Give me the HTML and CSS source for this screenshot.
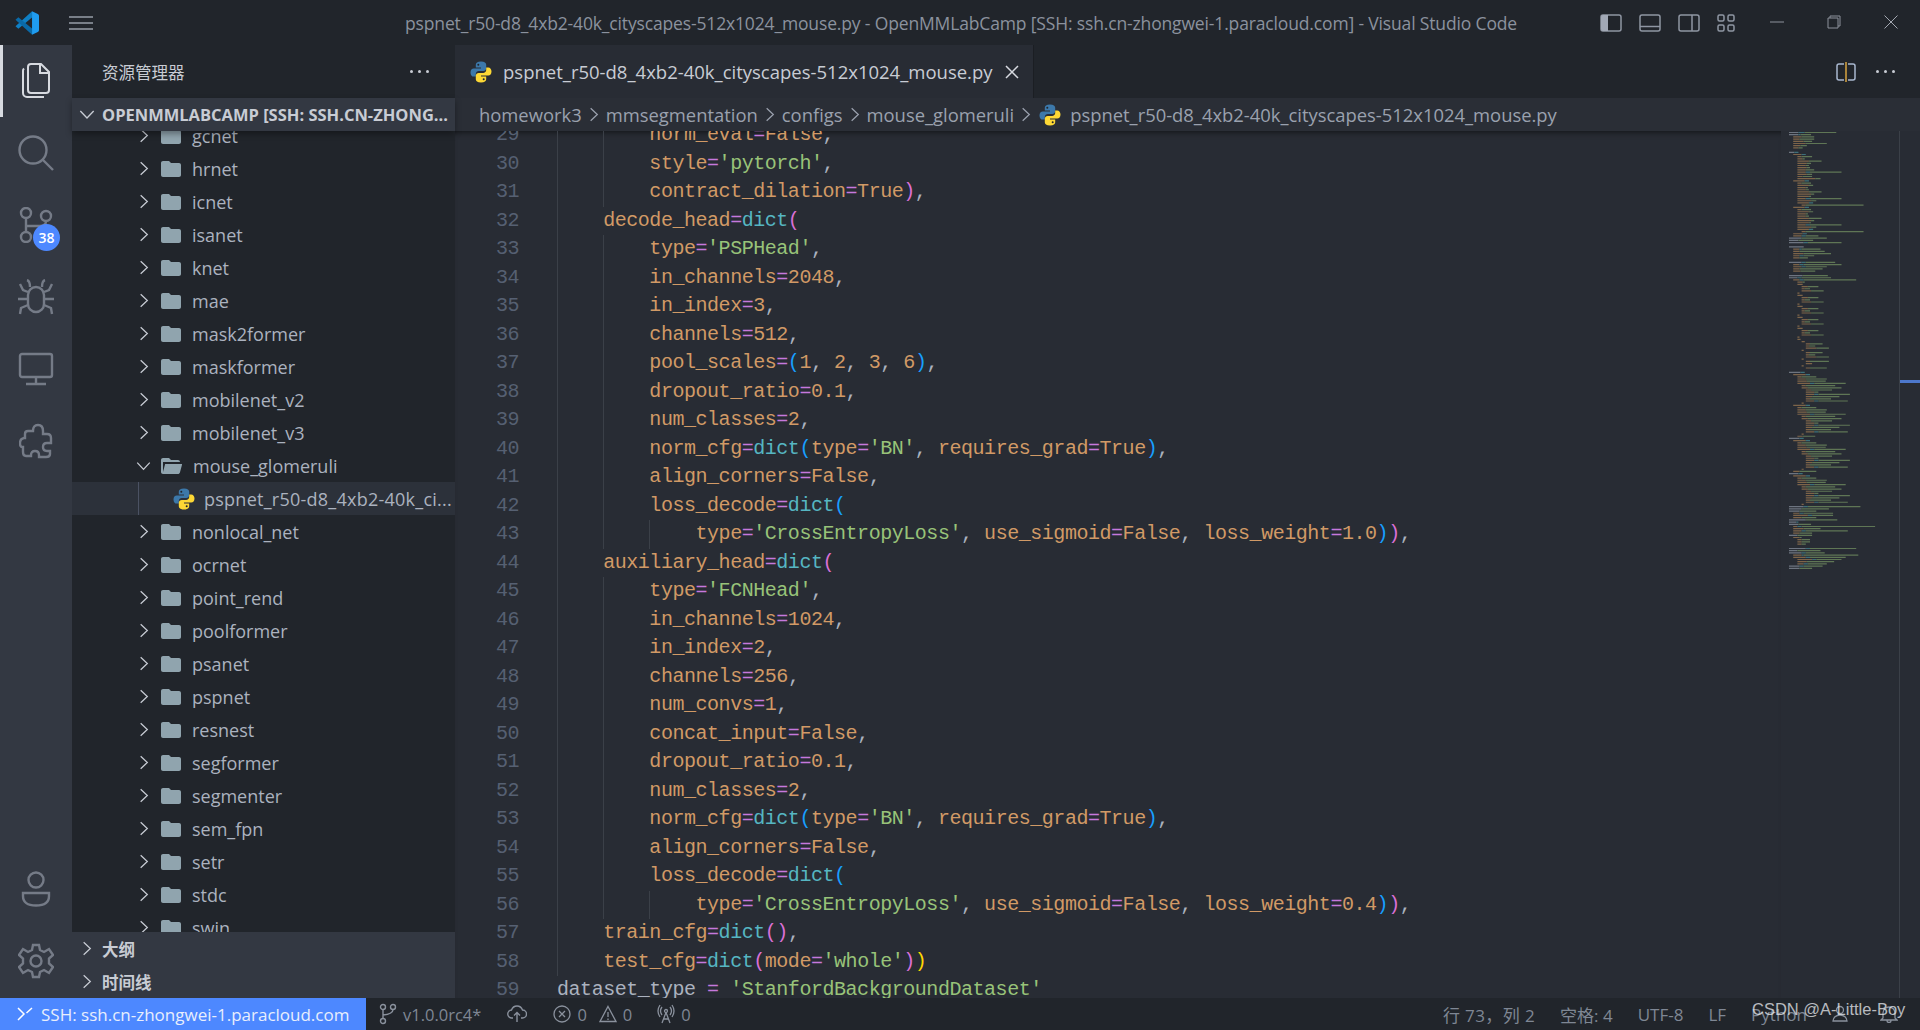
FILE: index.html
```html
<!DOCTYPE html>
<html lang="zh-CN">
<head>
    <meta charset="UTF-8">
    <title>pspnet_r50-d8_4xb2-40k_cityscapes-512x1024_mouse.py - OpenMMLabCamp</title>
    <link rel="stylesheet" href="styles.css">
</head>
<body>
    <!-- shared icons -->
    <svg class="defs" width="0" height="0">
        <symbol id="chev-r" viewBox="0 0 12 18"><path d="M2 1.5 10 9 2 16.5" fill="none" stroke="currentColor" stroke-width="1.5"/></symbol>
        <symbol id="chev-d" viewBox="0 0 18 12"><path d="M1.5 2 9 10 16.5 2" fill="none" stroke="currentColor" stroke-width="1.5"/></symbol>
        <symbol id="folder" viewBox="2 4 20 16"><path d="M10 4H4c-1.1 0-2 .9-2 2v12c0 1.1.9 2 2 2h16c1.1 0 2-.9 2-2V8c0-1.1-.9-2-2-2h-8l-2-2z" fill="#90a4ae"/></symbol>
        <symbol id="folder-open" viewBox="2 4 21 16"><path d="M19 20H4c-1.1 0-2-.9-2-2V6c0-1.1.9-2 2-2h6l2 2h7c1.1 0 2 .9 2 2H4v10l2.14-8h17.07l-2.28 8.5c-.23.87-1.01 1.5-1.93 1.5z" fill="#90a4ae"/></symbol>
        <symbol id="python" viewBox="0 0 24 24">
            <path d="M12 1.5C8.3 1.5 6.8 2.9 6.8 4.8v2.6H12v1H4.8C2.8 8.4 1.5 10 1.5 12.4s1.3 4.2 3.3 4.2h2v-2.7c0-1.7 1.4-2.9 3.1-2.9h4.4c1.6 0 2.9-1.2 2.9-2.8V4.8c0-1.9-1.5-3.3-5.2-3.3z" fill="#3c78aa"/>
            <path d="M12 22.500c3.700 0 5.200-1.400 5.200-3.300v-2.600H12v-1h7.200c2 0 3.300-1.600 3.300-4s-1.300-4.200-3.300-4.200h-2v2.700c0 1.700-1.400 2.900-3.100 2.900H9.700c-1.600 0-2.900 1.200-2.900 2.800v3.400c0 1.900 1.500 3.300 5.200 3.300z" fill="#fdd835"/>
            <circle cx="9.300" cy="4.700" r="1" fill="#21252b"/>
            <circle cx="14.700" cy="19.300" r="1" fill="#21252b"/>
        </symbol>
    </svg>

    <header class="titlebar">
        <svg class="logo" viewBox="0 0 100 100" width="24" height="24">
            <path d="M71 1 2 64 14 74 71 27z" fill="#0f7fc4"/>
            <path d="M71 99 2 36 14 26 71 73z" fill="#0a6aa8"/>
            <path d="M71 1 95 13Q100 15 100 20V80Q100 85 95 87L71 99z" fill="#1f9cf0"/>
        </svg>
        <svg class="menu" viewBox="0 0 26 16" width="26" height="16"><path d="M1 2H25M1 8H25M1 14H25" stroke="#979da8" stroke-width="1.500"/></svg>
        <div class="window-title">pspnet_r50-d8_4xb2-40k_cityscapes-512x1024_mouse.py - OpenMMLabCamp [SSH: ssh.cn-zhongwei-1.paracloud.com] - Visual Studio Code</div>
        <div class="layout-btns">
            <svg viewBox="0 0 22 18" width="22" height="18"><rect x="1" y="1" width="20" height="16" rx="2" fill="none" stroke="#8f96a3" stroke-width="1.500"/><path d="M1 3a2 2 0 0 1 2-2H8V17H3a2 2 0 0 1-2-2z" fill="#a2a9b6"/></svg>
            <svg viewBox="0 0 22 18" width="22" height="18"><rect x="1" y="1" width="20" height="16" rx="2" fill="none" stroke="#8f96a3" stroke-width="1.500"/><path d="M1 12.500H21" stroke="#8f96a3" stroke-width="1.500"/></svg>
            <svg viewBox="0 0 22 18" width="22" height="18"><rect x="1" y="1" width="20" height="16" rx="2" fill="none" stroke="#8f96a3" stroke-width="1.500"/><path d="M14 1V17" stroke="#8f96a3" stroke-width="1.500"/></svg>
            <svg viewBox="0 0 18 18" width="18" height="18"><g fill="none" stroke="#8f96a3" stroke-width="1.500"><rect x="1" y="1" width="6" height="6" rx="1.500"/><rect x="11" y="1" width="6" height="6" rx="1.500"/><rect x="1" y="11" width="6" height="6" rx="1.500"/><rect x="11" y="11" width="6" height="6" rx="1.500"/></g></svg>
        </div>
        <div class="window-btns">
            <svg viewBox="0 0 14 14" width="14" height="14"><path d="M0 7H14" stroke="#8d929c"/></svg>
            <svg viewBox="0 0 14 14" width="14" height="14"><path d="M3 3V1H13V11H11M1 3H11V13H1z" fill="none" stroke="#8d929c"/></svg>
            <svg viewBox="0 0 14 14" width="14" height="14"><path d="M.5.5 13.500 13.500M13.500.5.5 13.500" stroke="#a3a8b1"/></svg>
        </div>
    </header>

    <div class="workbench">
        <nav class="activitybar">
            <div class="activity-item active">
                <svg viewBox="0 0 32 38" width="32" height="38" fill="none" stroke="#d7dae0" stroke-width="2"><path d="M11 2H21L29 10V28a3 3 0 0 1-3 3H11a3 3 0 0 1-3-3V5a3 3 0 0 1 3-3zM20 2V11H29"/><path d="M4 6.500A3 3 0 0 0 3 9V31a4 4 0 0 0 4 4H24"/></svg>
            </div>
            <div class="activity-item">
                <svg viewBox="0 0 38 38" width="38" height="38" fill="none" stroke="#757b87" stroke-width="2.400"><circle cx="16" cy="16" r="13.500"/><path d="M25.500 25.500 36 36"/></svg>
            </div>
            <div class="activity-item">
                <svg viewBox="0 0 36 36" width="36" height="36" fill="none" stroke="#757b87" stroke-width="2.400"><circle cx="8" cy="6" r="5"/><circle cx="28" cy="9" r="5"/><circle cx="8" cy="30" r="5"/><path d="M8 11V25M8 19H22Q28 19 28 14"/></svg>
                <span class="badge">38</span>
            </div>
            <div class="activity-item">
                <svg viewBox="0 0 38 36" width="38" height="36" fill="none" stroke="#757b87" stroke-width="2.400"><rect x="11" y="8" width="16" height="25" rx="8"/><path d="M13 8Q13 2 10 1M25 8Q25 2 28 1M11 13 6 11 3 5M27 13 32 11 35 5M10 20H1M28 20H37M11 26 4 29 3 35M27 26 34 29 35 35"/></svg>
            </div>
            <div class="activity-item">
                <svg viewBox="0 0 36 34" width="36" height="34" fill="none" stroke="#757b87" stroke-width="2.400"><rect x="2" y="2" width="32" height="23" rx="2"/><path d="M18 25V32M8 32H28"/></svg>
            </div>
            <div class="activity-item">
                <svg viewBox="0 0 34 36" width="34" height="36" fill="none" stroke="#757b87" stroke-width="2.400"><path d="M14 8Q14 2 19 2T24 8V11H28Q32 11 32 15V20H28Q24 20 24 24T28 28H31V31Q31 34 27 34H20V32Q20 28 16 28T12 32V33H7Q4 33 4 29V24H3Q1 24 1 20T5 15H6V11Q6 8 9 8z"/></svg>
            </div>
            <div class="activity-spacer"></div>
            <div class="activity-item">
                <svg viewBox="0 0 30 36" width="30" height="36" fill="none" stroke="#757b87" stroke-width="2.400"><circle cx="15" cy="9" r="7.500"/><path d="M2 22H28V25Q28 34.500 15 34.500T2 25z"/></svg>
            </div>
            <div class="activity-item">
                <svg viewBox="0 0 36 36" width="36" height="36" fill="none" stroke="#757b87" stroke-width="2.400"><circle cx="18" cy="18" r="5.500"/><path d="M15 2H21L22 7 26 9 31 6 35 12 31 15.500V20.500L35 24 31 30 26 27 22 29 21 34H15L14 29 10 27 5 30 1 24 5 20.500V15.500L1 12 5 6 10 9 14 7z"/></svg>
            </div>
        </nav>

        <aside class="sidebar">
            <div class="sidebar-title">
                <span>资源管理器</span>
                <span class="dots"><i></i><i></i><i></i></span>
            </div>
            <div class="section-head workspace">
                <svg class="chev-d" width="16" height="11"><use href="#chev-d"/></svg>
                <span class="section-name">OPENMMLABCAMP [SSH: SSH.CN-ZHONG...</span>
            </div>
            <ul class="tree">
                <li class="row"><svg class="chev" width="10" height="15"><use href="#chev-r"/></svg><svg class="ficon" width="20" height="16"><use href="#folder"/></svg>gcnet</li>
                <li class="row"><svg class="chev" width="10" height="15"><use href="#chev-r"/></svg><svg class="ficon" width="20" height="16"><use href="#folder"/></svg>hrnet</li>
                <li class="row"><svg class="chev" width="10" height="15"><use href="#chev-r"/></svg><svg class="ficon" width="20" height="16"><use href="#folder"/></svg>icnet</li>
                <li class="row"><svg class="chev" width="10" height="15"><use href="#chev-r"/></svg><svg class="ficon" width="20" height="16"><use href="#folder"/></svg>isanet</li>
                <li class="row"><svg class="chev" width="10" height="15"><use href="#chev-r"/></svg><svg class="ficon" width="20" height="16"><use href="#folder"/></svg>knet</li>
                <li class="row"><svg class="chev" width="10" height="15"><use href="#chev-r"/></svg><svg class="ficon" width="20" height="16"><use href="#folder"/></svg>mae</li>
                <li class="row"><svg class="chev" width="10" height="15"><use href="#chev-r"/></svg><svg class="ficon" width="20" height="16"><use href="#folder"/></svg>mask2former</li>
                <li class="row"><svg class="chev" width="10" height="15"><use href="#chev-r"/></svg><svg class="ficon" width="20" height="16"><use href="#folder"/></svg>maskformer</li>
                <li class="row"><svg class="chev" width="10" height="15"><use href="#chev-r"/></svg><svg class="ficon" width="20" height="16"><use href="#folder"/></svg>mobilenet_v2</li>
                <li class="row"><svg class="chev" width="10" height="15"><use href="#chev-r"/></svg><svg class="ficon" width="20" height="16"><use href="#folder"/></svg>mobilenet_v3</li>
                <li class="row"><svg class="chev-open" width="15" height="10"><use href="#chev-d"/></svg><svg class="ficon" width="21" height="16"><use href="#folder-open"/></svg>mouse_glomeruli</li>
                <li class="row file"><svg class="pyicon" width="24" height="24"><use href="#python"/></svg>pspnet_r50-d8_4xb2-40k_ci...</li>
                <li class="row"><svg class="chev" width="10" height="15"><use href="#chev-r"/></svg><svg class="ficon" width="20" height="16"><use href="#folder"/></svg>nonlocal_net</li>
                <li class="row"><svg class="chev" width="10" height="15"><use href="#chev-r"/></svg><svg class="ficon" width="20" height="16"><use href="#folder"/></svg>ocrnet</li>
                <li class="row"><svg class="chev" width="10" height="15"><use href="#chev-r"/></svg><svg class="ficon" width="20" height="16"><use href="#folder"/></svg>point_rend</li>
                <li class="row"><svg class="chev" width="10" height="15"><use href="#chev-r"/></svg><svg class="ficon" width="20" height="16"><use href="#folder"/></svg>poolformer</li>
                <li class="row"><svg class="chev" width="10" height="15"><use href="#chev-r"/></svg><svg class="ficon" width="20" height="16"><use href="#folder"/></svg>psanet</li>
                <li class="row"><svg class="chev" width="10" height="15"><use href="#chev-r"/></svg><svg class="ficon" width="20" height="16"><use href="#folder"/></svg>pspnet</li>
                <li class="row"><svg class="chev" width="10" height="15"><use href="#chev-r"/></svg><svg class="ficon" width="20" height="16"><use href="#folder"/></svg>resnest</li>
                <li class="row"><svg class="chev" width="10" height="15"><use href="#chev-r"/></svg><svg class="ficon" width="20" height="16"><use href="#folder"/></svg>segformer</li>
                <li class="row"><svg class="chev" width="10" height="15"><use href="#chev-r"/></svg><svg class="ficon" width="20" height="16"><use href="#folder"/></svg>segmenter</li>
                <li class="row"><svg class="chev" width="10" height="15"><use href="#chev-r"/></svg><svg class="ficon" width="20" height="16"><use href="#folder"/></svg>sem_fpn</li>
                <li class="row"><svg class="chev" width="10" height="15"><use href="#chev-r"/></svg><svg class="ficon" width="20" height="16"><use href="#folder"/></svg>setr</li>
                <li class="row"><svg class="chev" width="10" height="15"><use href="#chev-r"/></svg><svg class="ficon" width="20" height="16"><use href="#folder"/></svg>stdc</li>
                <li class="row"><svg class="chev" width="10" height="15"><use href="#chev-r"/></svg><svg class="ficon" width="20" height="16"><use href="#folder"/></svg>swin</li>
            </ul>
            <div class="section-head collapsed">
                <svg class="chev-s" width="10" height="15"><use href="#chev-r"/></svg>
                <span class="section-name">大纲</span>
            </div>
            <div class="section-head collapsed">
                <svg class="chev-s" width="10" height="15"><use href="#chev-r"/></svg>
                <span class="section-name">时间线</span>
            </div>
        </aside>

        <main class="editor">
            <div class="tabs">
                <div class="tab">
                    <svg width="24" height="24"><use href="#python"/></svg>
                    <span class="tab-name">pspnet_r50-d8_4xb2-40k_cityscapes-512x1024_mouse.py</span>
                    <svg class="tab-close" viewBox="0 0 14 14" width="14" height="14"><path d="M1 1 13 13M13 1 1 13" stroke="#d7dae0" stroke-width="1.500"/></svg>
                </div>
                <div class="tab-actions">
                    <svg viewBox="0 0 20 20" width="20" height="20" fill="none" stroke="#a9b8d0" stroke-width="1.500"><path d="M8 2H3a2 2 0 0 0-2 2V16a2 2 0 0 0 2 2H8M12 2H17a2 2 0 0 1 2 2V16a2 2 0 0 1-2 2H12"/><path d="M10 0V20" stroke="#d9a441"/></svg>
                    <span class="dots"><i></i><i></i><i></i></span>
                </div>
            </div>
            <div class="breadcrumbs">
                <span>homework3</span><svg class="crumb-sep" width="10" height="15"><use href="#chev-r"/></svg>
                <span>mmsegmentation</span><svg class="crumb-sep" width="10" height="15"><use href="#chev-r"/></svg>
                <span>configs</span><svg class="crumb-sep" width="10" height="15"><use href="#chev-r"/></svg>
                <span>mouse_glomeruli</span><svg class="crumb-sep" width="10" height="15"><use href="#chev-r"/></svg>
                <svg class="crumb-py" width="24" height="24"><use href="#python"/></svg>
                <span>pspnet_r50-d8_4xb2-40k_cityscapes-512x1024_mouse.py</span>
            </div>
            <div class="editor-body">
                <div class="code">
                    <div class="line"><span class="ln">29</span><code class="g2">        <b class="k">norm_eval</b><b class="o">=</b><b class="k">False</b>,</code></div>
                    <div class="line"><span class="ln">30</span><code class="g2">        <b class="k">style</b><b class="o">=</b><b class="s">'pytorch'</b>,</code></div>
                    <div class="line"><span class="ln">31</span><code class="g2">        <b class="k">contract_dilation</b><b class="o">=</b><b class="k">True</b><b class="p1">)</b>,</code></div>
                    <div class="line"><span class="ln">32</span><code class="g1">    <b class="k">decode_head</b><b class="o">=</b><b class="f">dict</b><b class="p1">(</b></code></div>
                    <div class="line"><span class="ln">33</span><code class="g2">        <b class="k">type</b><b class="o">=</b><b class="s">'PSPHead'</b>,</code></div>
                    <div class="line"><span class="ln">34</span><code class="g2">        <b class="k">in_channels</b><b class="o">=</b><b class="k">2048</b>,</code></div>
                    <div class="line"><span class="ln">35</span><code class="g2">        <b class="k">in_index</b><b class="o">=</b><b class="k">3</b>,</code></div>
                    <div class="line"><span class="ln">36</span><code class="g2">        <b class="k">channels</b><b class="o">=</b><b class="k">512</b>,</code></div>
                    <div class="line"><span class="ln">37</span><code class="g2">        <b class="k">pool_scales</b><b class="o">=</b><b class="p2">(</b><b class="k">1</b>, <b class="k">2</b>, <b class="k">3</b>, <b class="k">6</b><b class="p2">)</b>,</code></div>
                    <div class="line"><span class="ln">38</span><code class="g2">        <b class="k">dropout_ratio</b><b class="o">=</b><b class="k">0.1</b>,</code></div>
                    <div class="line"><span class="ln">39</span><code class="g2">        <b class="k">num_classes</b><b class="o">=</b><b class="k">2</b>,</code></div>
                    <div class="line"><span class="ln">40</span><code class="g2">        <b class="k">norm_cfg</b><b class="o">=</b><b class="f">dict</b><b class="p2">(</b><b class="k">type</b><b class="o">=</b><b class="s">'BN'</b>, <b class="k">requires_grad</b><b class="o">=</b><b class="k">True</b><b class="p2">)</b>,</code></div>
                    <div class="line"><span class="ln">41</span><code class="g2">        <b class="k">align_corners</b><b class="o">=</b><b class="k">False</b>,</code></div>
                    <div class="line"><span class="ln">42</span><code class="g2">        <b class="k">loss_decode</b><b class="o">=</b><b class="f">dict</b><b class="p2">(</b></code></div>
                    <div class="line"><span class="ln">43</span><code class="g3">            <b class="k">type</b><b class="o">=</b><b class="s">'CrossEntropyLoss'</b>, <b class="k">use_sigmoid</b><b class="o">=</b><b class="k">False</b>, <b class="k">loss_weight</b><b class="o">=</b><b class="k">1.0</b><b class="p2">)</b><b class="p1">)</b>,</code></div>
                    <div class="line"><span class="ln">44</span><code class="g1">    <b class="k">auxiliary_head</b><b class="o">=</b><b class="f">dict</b><b class="p1">(</b></code></div>
                    <div class="line"><span class="ln">45</span><code class="g2">        <b class="k">type</b><b class="o">=</b><b class="s">'FCNHead'</b>,</code></div>
                    <div class="line"><span class="ln">46</span><code class="g2">        <b class="k">in_channels</b><b class="o">=</b><b class="k">1024</b>,</code></div>
                    <div class="line"><span class="ln">47</span><code class="g2">        <b class="k">in_index</b><b class="o">=</b><b class="k">2</b>,</code></div>
                    <div class="line"><span class="ln">48</span><code class="g2">        <b class="k">channels</b><b class="o">=</b><b class="k">256</b>,</code></div>
                    <div class="line"><span class="ln">49</span><code class="g2">        <b class="k">num_convs</b><b class="o">=</b><b class="k">1</b>,</code></div>
                    <div class="line"><span class="ln">50</span><code class="g2">        <b class="k">concat_input</b><b class="o">=</b><b class="k">False</b>,</code></div>
                    <div class="line"><span class="ln">51</span><code class="g2">        <b class="k">dropout_ratio</b><b class="o">=</b><b class="k">0.1</b>,</code></div>
                    <div class="line"><span class="ln">52</span><code class="g2">        <b class="k">num_classes</b><b class="o">=</b><b class="k">2</b>,</code></div>
                    <div class="line"><span class="ln">53</span><code class="g2">        <b class="k">norm_cfg</b><b class="o">=</b><b class="f">dict</b><b class="p2">(</b><b class="k">type</b><b class="o">=</b><b class="s">'BN'</b>, <b class="k">requires_grad</b><b class="o">=</b><b class="k">True</b><b class="p2">)</b>,</code></div>
                    <div class="line"><span class="ln">54</span><code class="g2">        <b class="k">align_corners</b><b class="o">=</b><b class="k">False</b>,</code></div>
                    <div class="line"><span class="ln">55</span><code class="g2">        <b class="k">loss_decode</b><b class="o">=</b><b class="f">dict</b><b class="p2">(</b></code></div>
                    <div class="line"><span class="ln">56</span><code class="g3">            <b class="k">type</b><b class="o">=</b><b class="s">'CrossEntropyLoss'</b>, <b class="k">use_sigmoid</b><b class="o">=</b><b class="k">False</b>, <b class="k">loss_weight</b><b class="o">=</b><b class="k">0.4</b><b class="p2">)</b><b class="p1">)</b>,</code></div>
                    <div class="line"><span class="ln">57</span><code class="g1">    <b class="k">train_cfg</b><b class="o">=</b><b class="f">dict</b><b class="p1">()</b>,</code></div>
                    <div class="line"><span class="ln">58</span><code class="g1">    <b class="k">test_cfg</b><b class="o">=</b><b class="f">dict</b><b class="p1">(</b><b class="k">mode</b><b class="o">=</b><b class="s">'whole'</b><b class="p1">)</b><b class="p3">)</b></code></div>
                    <div class="line"><span class="ln">59</span><code>dataset_type <b class="o">=</b> <b class="s">'StanfordBackgroundDataset'</b></code></div>
                </div>
                <svg class="minimap" id="minimap" width="118" height="460"></svg>
                <div class="ruler"><span class="ruler-tick"></span></div>
            </div>
        </main>
    </div>

    <footer class="statusbar">
        <div class="remote">
            <svg viewBox="0 0 16 14" width="16" height="14" fill="none" stroke="#fff" stroke-width="1.500"><path d="M1 1 7 7 1 13M15 1 9.500 6"/></svg>
            <span>SSH: ssh.cn-zhongwei-1.paracloud.com</span>
        </div>
        <div class="status-left">
            <span class="branch"><svg viewBox="0 0 18 22" width="18" height="22" fill="none" stroke="#8a919d" stroke-width="1.400"><circle cx="4" cy="4" r="2.500"/><circle cx="14" cy="4" r="2.500"/><circle cx="4" cy="18" r="2.500"/><path d="M4 6.500V15.500M14 6.500Q14 11 4 12"/></svg>v1.0.0rc4*</span>
            <svg class="cloud" viewBox="0 0 20 18" width="20" height="18" fill="none" stroke="#8a919d" stroke-width="1.400"><path d="M6 13H5a4 4 0 0 1-.5-8Q6 1 10 1t5.500 4a4 4 0 0 1 0 8H14M10 17V8M7 10.500 10 7.500l3 3"/></svg>
            <span class="problems">
                <svg viewBox="0 0 18 18" width="18" height="18" fill="none" stroke="#8a919d" stroke-width="1.300"><circle cx="9" cy="9" r="8"/><path d="M6 6 12 12M12 6 6 12"/></svg>0
                <svg viewBox="0 0 18 18" width="18" height="18" fill="none" stroke="#8a919d" stroke-width="1.300"><path d="M9 1.500 17 16.500H1zM9 7V12M9 13.500V15"/></svg>0
            </span>
            <span class="ports"><svg viewBox="0 0 18 20" width="18" height="20" fill="none" stroke="#8a919d" stroke-width="1.300"><circle cx="9" cy="7" r="1.500"/><path d="M9 8.500 5 19M9 8.500 13 19M6.500 15H11.500M5 3Q2 7 5 11M13 3Q16 7 13 11M3 1Q-1 7 3 13M15 1Q19 7 15 13"/></svg>0</span>
        </div>
        <div class="status-right">
            <span class="cursor-pos">行 73，列 2</span>
            <span>空格: 4</span>
            <span>UTF-8</span>
            <span>LF</span>
            <span>Python</span>
            <svg viewBox="0 0 16 18" width="16" height="18" fill="none" stroke="#8a919d" stroke-width="1.300"><circle cx="8" cy="5" r="3.500"/><path d="M1 16a7 6 0 0 1 14 0z"/></svg>
            <svg class="bell" viewBox="0 0 18 18" width="18" height="18" fill="none" stroke="#8a919d" stroke-width="1.300"><path d="M3 13V8a6 6 0 0 1 12 0V13L17 15H1zM7 15.500a2 2 0 0 0 4 0"/></svg>
        </div>
        <div class="watermark">CSDN @A-Little-Boy</div>
    </footer>

    <script src="minimap.js"></script>
</body>
</html>
```

FILE: styles.css
```css
* {
    box-sizing: border-box;
    margin: 0;
    padding: 0;
}

html, body {
    height: 100%;
    overflow: hidden;
}

body {
    display: flex;
    flex-direction: column;
    background-color: #21252b;
    color: #abb2bf;
    font-family: "Open Sans", "Noto Sans CJK SC", sans-serif;
    font-size: 17px;
}

.defs {
    position: absolute;
}

/* title bar */
.titlebar {
    height: 45px;
    flex: none;
    display: flex;
    align-items: center;
    background-color: #21252b;
}

.logo {
    margin-left: 15px;
}

.menu {
    margin-left: 29px;
}

.window-title {
    margin-left: 311px;
    width: 1112px;
    font-size: 17.5px;
    letter-spacing: -0.15px;
    color: #8b929e;
    white-space: nowrap;
}

.layout-btns {
    display: flex;
    align-items: center;
    gap: 17px;
    margin-left: 83px;
}

.window-btns {
    display: flex;
    align-items: center;
    gap: 43px;
    margin-left: 35px;
    margin-top: -2px;
}

/* activity bar */
.workbench {
    flex: 1;
    min-height: 0;
    display: flex;
}

.activitybar {
    width: 72px;
    flex: none;
    display: flex;
    flex-direction: column;
    background-color: #333842;
    padding-bottom: 1px;
}

.activity-item {
    position: relative;
    height: 72px;
    flex: none;
    display: flex;
    align-items: center;
    justify-content: center;
}

.activity-item.active {
    border-left: 3px solid #d7dae0;
    padding-right: 3px;
}

.activity-spacer {
    flex: 1;
}

.badge {
    position: absolute;
    left: 33px;
    top: 35px;
    width: 27px;
    height: 27px;
    border-radius: 50%;
    background-color: #4d88ff;
    color: #fff;
    font-size: 14px;
    font-weight: 600;
    line-height: 27px;
    text-align: center;
}

/* side bar */
.sidebar {
    width: 383px;
    flex: none;
    display: flex;
    flex-direction: column;
    background-color: #21252b;
}

.sidebar-title {
    height: 53px;
    flex: none;
    display: flex;
    align-items: center;
    justify-content: space-between;
    padding: 0 26px 0 30px;
    color: #c8ccd4;
    font-size: 16.5px;
}

.dots {
    display: flex;
    gap: 5px;
}

.dots i {
    width: 3px;
    height: 3px;
    border-radius: 50%;
    background-color: #c8ccd4;
}

.section-head {
    height: 33px;
    flex: none;
    display: flex;
    align-items: center;
    background-color: #333842;
    color: #c8ccd4;
    font-size: 16.5px;
    font-weight: 700;
    white-space: nowrap;
}

.workspace {
    position: relative;
    z-index: 1;
    padding-left: 7px;
    box-shadow: 0 3px 6px rgba(0, 0, 0, 0.35);
}

.chev-d {
    margin-right: 7px;
}

.collapsed {
    padding-left: 10px;
}

.chev-s {
    margin-right: 10px;
}

.tree {
    flex: 1;
    min-height: 0;
    overflow: hidden;
    list-style: none;
    margin-top: -12px;
}

.row {
    height: 33px;
    display: flex;
    align-items: center;
    padding-left: 67px;
    white-space: nowrap;
    font-size: 18px;
}

.chev {
    margin-right: 12px;
    color: #c8ccd4;
}

.chev-open {
    margin-left: -3px;
    margin-right: 10px;
    color: #c8ccd4;
}

.ficon {
    margin-right: 11px;
}

.row.file {
    padding-left: 100px;
    background-color: #2c313a;
    letter-spacing: 0.25px;
    position: relative;
}

.row.file::before {
    content: "";
    position: absolute;
    left: 66px;
    top: 0;
    bottom: 0;
    width: 1px;
    background-color: #4b5263;
}

.pyicon {
    margin-right: 8px;
}

/* editor */
.editor {
    flex: 1;
    min-width: 0;
    display: flex;
    flex-direction: column;
    background-color: #282c34;
}

.tabs {
    height: 53px;
    flex: none;
    display: flex;
    background-color: #21252b;
}

.tab {
    width: 579px;
    display: flex;
    align-items: center;
    padding-left: 14px;
    background-color: #282c34;
    border-right: 1px solid #1b1e23;
    white-space: nowrap;
}

.tab-name {
    width: 489px;
    margin-left: 10px;
    font-size: 18.5px;
    color: #c8ccd4;
}

.tab-close {
    margin-left: 13px;
}

.tab-actions {
    margin-left: auto;
    display: flex;
    align-items: center;
    gap: 20px;
    padding-right: 25px;
}

.breadcrumbs {
    height: 33px;
    flex: none;
    display: flex;
    align-items: center;
    padding-left: 24px;
    font-size: 18.4px;
    color: #9aa1ae;
    background-color: #2a2e36;
    white-space: nowrap;
}

.crumb-sep {
    margin: 0 7px;
    color: #9aa1ae;
}

.crumb-py {
    margin: 0 8px 0 0;
}

.editor-body {
    flex: 1;
    min-height: 0;
    display: flex;
}

.code {
    flex: 1;
    min-width: 0;
    overflow: hidden;
    box-shadow: inset 0 6px 6px -5px rgba(0, 0, 0, 0.6);
}

.line {
    height: 28.5px;
    display: flex;
    line-height: 28.5px;
}

.line:first-child {
    margin-top: -10px;
}

.ln {
    width: 64px;
    flex: none;
    margin-right: 38px;
    text-align: right;
    color: #566072;
    font-family: "Liberation Mono", monospace;
    font-size: 20px;
    letter-spacing: -0.46px;
}

code {
    flex: 1;
    white-space: pre;
    font-family: "Liberation Mono", monospace;
    font-size: 20px;
    letter-spacing: -0.46px;
    color: #abb2bf;
}

code b {
    font-weight: 400;
}

.k { color: #d19a66; }
.o { color: #c678dd; }
.f { color: #56b6c2; }
.s { color: #98c379; }
.p1 { color: #da70d6; }
.p2 { color: #179fff; }
.p3 { color: #ffd700; }

/* indent guides, one per level */
.g1 {
    background: linear-gradient(#3b4048, #3b4048) 0 0 / 1px 100% no-repeat;
}

.g2 {
    background:
        linear-gradient(#3b4048, #3b4048) 0 0 / 1px 100% no-repeat,
        linear-gradient(#3b4048, #3b4048) 46px 0 / 1px 100% no-repeat;
}

.g3 {
    background:
        linear-gradient(#3b4048, #3b4048) 0 0 / 1px 100% no-repeat,
        linear-gradient(#3b4048, #3b4048) 46px 0 / 1px 100% no-repeat,
        linear-gradient(#3b4048, #3b4048) 92px 0 / 1px 100% no-repeat;
}

.minimap {
    flex: none;
}

.ruler {
    position: relative;
    width: 21px;
    flex: none;
    border-left: 1px solid #3b4048;
}

.ruler-tick {
    position: absolute;
    left: 0;
    right: 0;
    top: 249px;
    height: 3px;
    background-color: #4d78cc;
}

/* status bar */
.statusbar {
    position: relative;
    height: 32px;
    flex: none;
    display: flex;
    align-items: center;
    background-color: #21252b;
    color: #7f8794;
    font-size: 16.5px;
    white-space: nowrap;
}

.statusbar svg {
    flex: none;
}

.remote {
    width: 366px;
    height: 100%;
    flex: none;
    display: flex;
    align-items: center;
    gap: 8px;
    padding-left: 17px;
    background-color: #4d88ff;
    color: #e8eefc;
    font-size: 17px;
}

.status-left {
    display: flex;
    align-items: center;
    margin-left: 13px;
}

.branch, .problems, .ports {
    display: flex;
    align-items: center;
    gap: 6px;
}

.cloud {
    margin-left: 26px;
}

.problems {
    margin-left: 26px;
}

.problems svg + svg {
    margin-left: 6px;
}

.ports {
    margin-left: 25px;
}

.status-right {
    margin-left: auto;
    display: flex;
    align-items: center;
    gap: 25px;
    padding-right: 22px;
    font-size: 17px;
}

.cursor-pos {
    letter-spacing: 0.4px;
}

.bell {
    margin-left: 7px;
}

.watermark {
    position: absolute;
    left: 1752px;
    top: 2px;
    font-family: "Liberation Sans", sans-serif;
    font-size: 16.5px;
    color: rgba(235, 238, 242, 0.75);
}
```

FILE: minimap.js
```js
// rough picture of the file: [indent, key, teal, green] in columns per line
const bb = [[4,8,4,0],[8,4,0,10],[8,5,0,2],[8,11,0,12],[8,9,0,4],[8,8,0,3],[8,9,0,3],[8,8,0,8],[8,8,4,30],[8,9,0,5],[8,5,0,9],[8,17,0,5]];
const head = [[4,11,4,0],[8,4,0,9],[8,11,0,4],[8,8,0,2],[8,8,0,3],[8,11,0,12],[8,13,0,3],[8,11,0,2],[8,8,4,30],[8,13,0,5],[8,11,4,0],[12,4,0,55]];
const aug = [[8,5,0,0],[12,6,0,10],[12,3,0,5],[12,9,0,12],[8,2,0,0]];
const cfg = [[4,12,4,0],[8,4,0,14],[8,8,0,20],[8,9,0,18],[8,12,4,30],[12,4,0,28],[12,6,0,32],[16,5,0,20],[16,8,0,4],[16,8,4,30],[16,6,0,26],[16,4,0,20],[16,8,4,28],[12,2,0,0]];
const rows = [
    [0,9,6,30],[0,9,2,10],[4,8,0,12],[4,6,0,14],[4,10,0,8],[4,12,0,20],[4,7,0,6],[4,5,0,4],[0,0,0,0],
    [0,5,4,0], ...bb, ...head, ...head, [4,9,4,0],[4,8,4,12],
    [0,12,0,24],[0,9,0,14],[0,14,4,32],[0,0,0,0],
    [0,14,0,0],[4,6,2,18],[4,6,0,24],[4,10,0,26],[4,6,4,10],[4,6,0,8],[0,0,0,0],
    [0,12,4,28],[4,6,4,36],[4,8,4,20],[4,6,0,22],[4,7,0,14],[0,0,0,0],
    [0,13,0,24],[0,8,4,28],[4,6,4,50],[8,5,0,2],
    ...aug, ...aug, ...aug, ...aug, ...aug, [8,3,0,0],
    [12,3,0,0],[16,4,0,12],[16,3,0,6],[16,10,0,12],[12,2,0,0],[16,4,0,12],[16,3,0,6],[16,10,0,12],[12,2,0,0],[16,4,0,18],[16,6,0,0],[12,2,0,0],[16,4,0,16],
    [0,0,0,0],[0,11,4,0],...cfg,...cfg,[8,5,0,12],[0,10,4,0],...cfg,[4,6,0,16],[0,9,4,0],...cfg,
    [0,14,4,50],[0,12,0,26],[0,10,0,16],[4,6,4,28],[4,14,4,20],[4,8,0,14],[0,16,0,30],
    [0,7,2,0],[0,9,0,12],[4,4,4,70],[4,10,0,16],[4,8,4,40],[4,6,0,12],[0,8,0,14],[4,6,0,2],[8,4,0,8],[8,4,0,8],[8,4,0,4],
    [0,0,0,0],[0,16,4,44],[0,8,0,22],[0,12,4,18],[4,8,2,52],[4,12,4,34],[8,14,4,24],[8,9,0,26],[8,6,4,18],
    [0,10,4,18],[0,10,0,12]
];

const colours = { plain: "#6d7480", key: "#7d6449", teal: "#3d707b", green: "#5f7655" };
const paths = { plain: "", key: "", teal: "", green: "" };
const pitch = 438 / rows.length; // the map fills this height

rows.forEach(function (r, i) {
    const y = 1.5 + i * pitch;
    let x = 8 + r[0] * 1.05;
    if (r[1]) {
        paths[r[0] === 0 ? "plain" : "key"] += `M${x} ${y}h${r[1] * 1.05}`;
        x += r[1] * 1.05;
    }
    if (r[2]) {
        paths.teal += `M${x} ${y}h${r[2] * 1.05}`;
        x += r[2] * 1.05;
    }
    if (r[3]) {
        paths.green += `M${x} ${y}h${r[3] * 1.05}`;
    }
});

const map = document.getElementById("minimap");
map.innerHTML = Object.keys(paths).map(function (k) {
    return `<path d="${paths[k]}" stroke="${colours[k]}" stroke-width="1.2" fill="none"/>`;
}).join("");
```
